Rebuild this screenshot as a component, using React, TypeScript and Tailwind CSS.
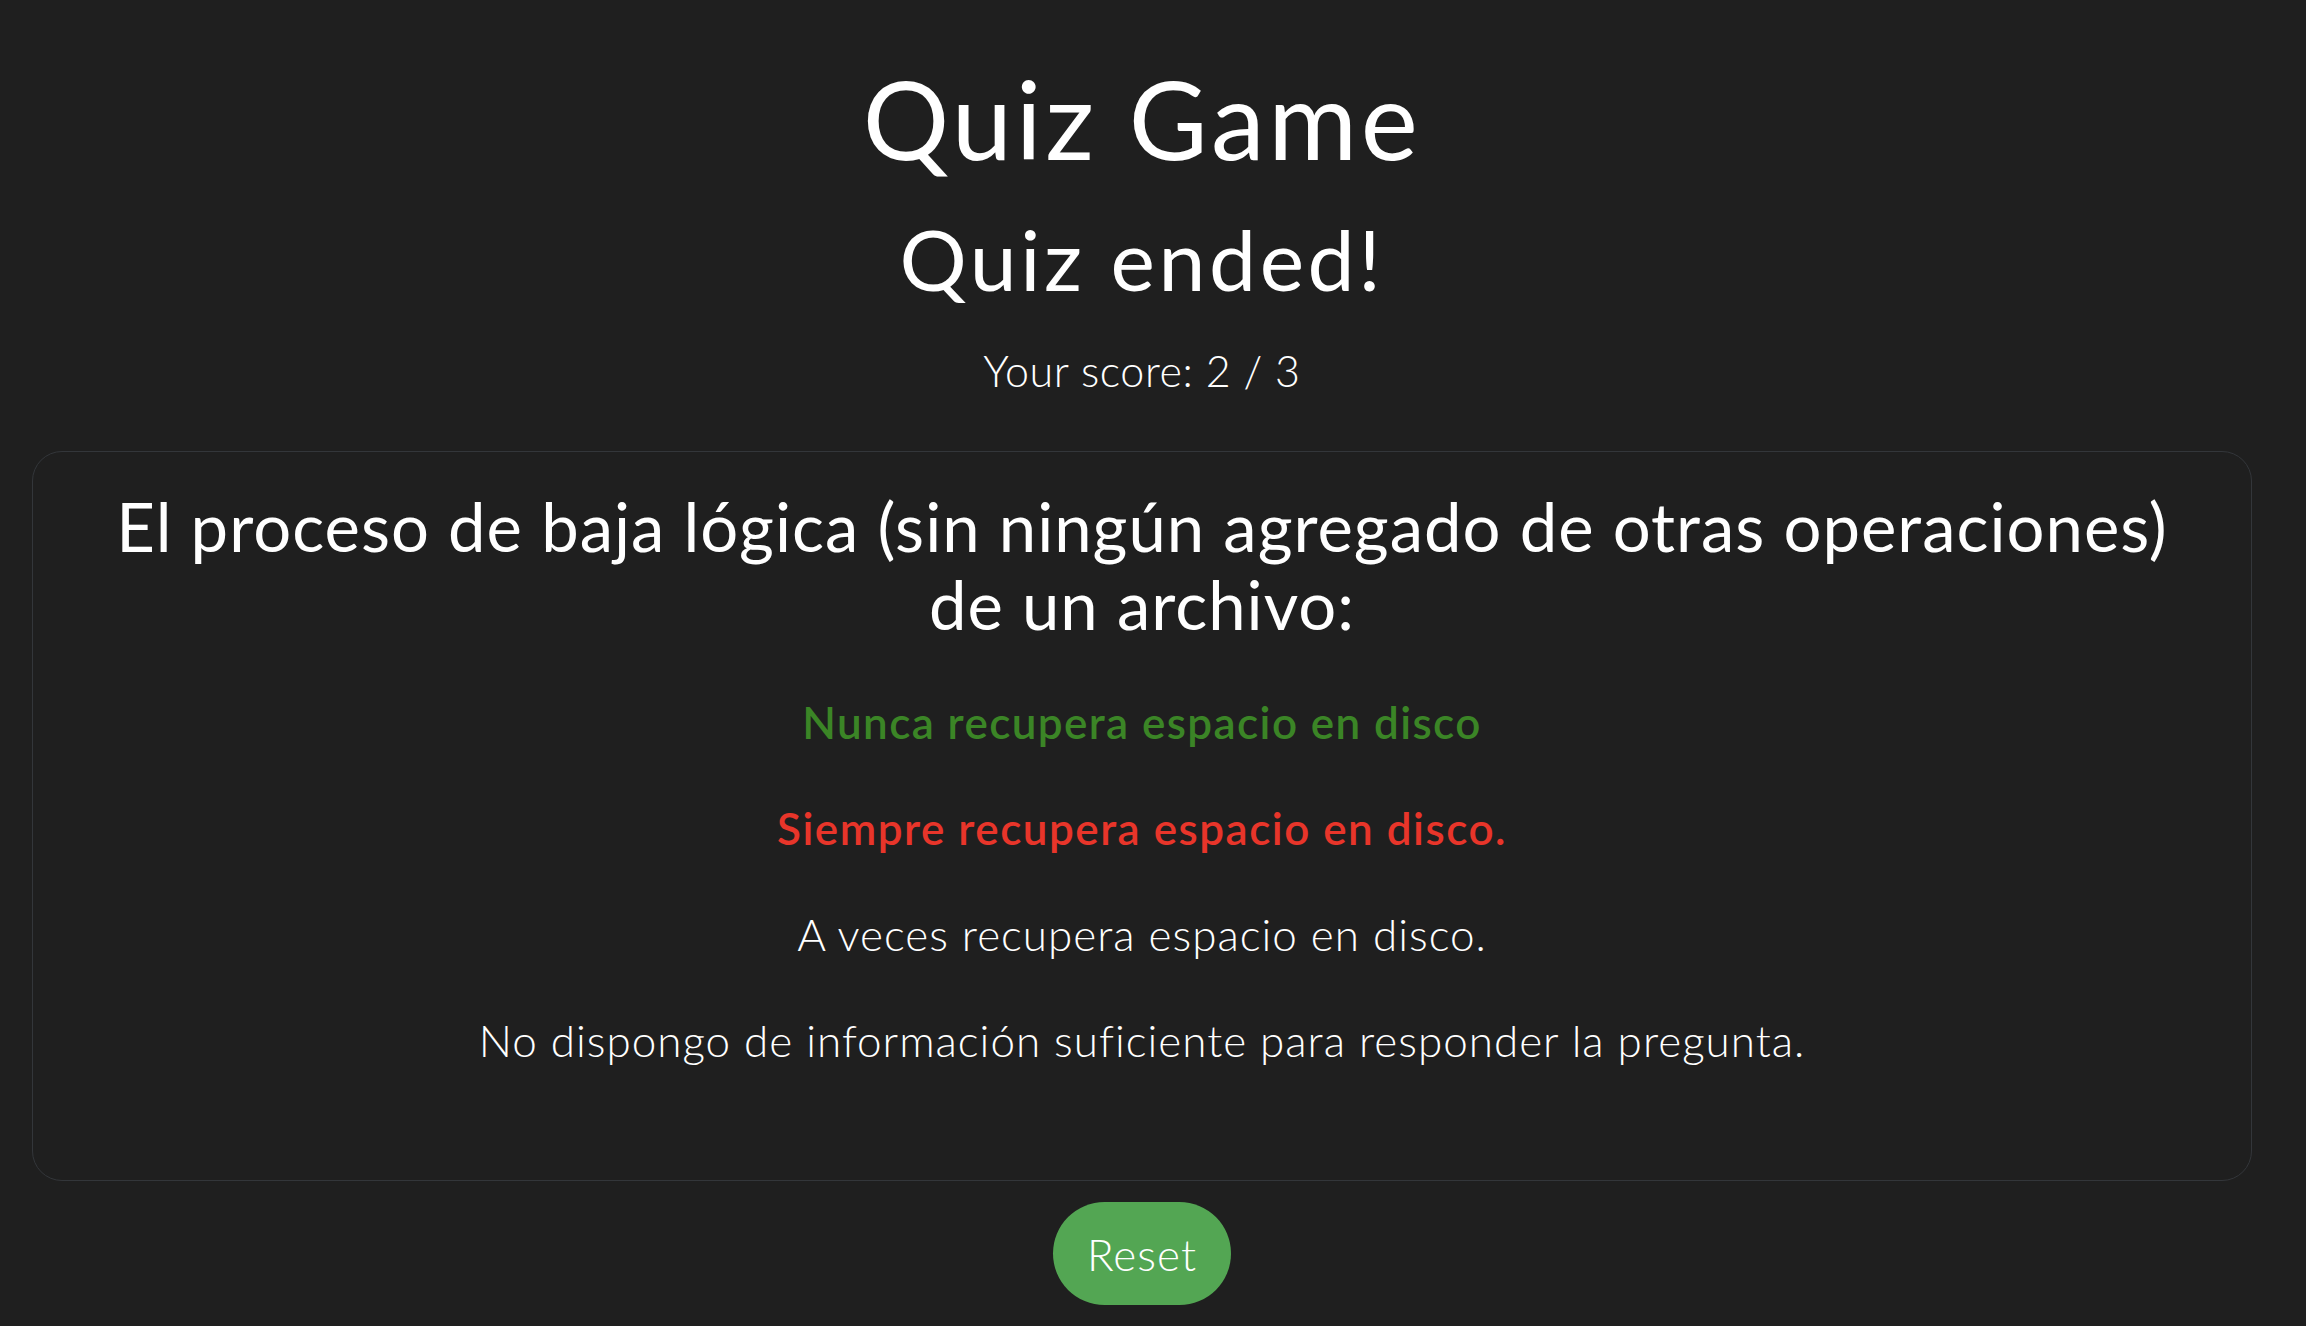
const options = [
    { text: "Nunca recupera espacio en disco", state: "correct" },
    { text: "Siempre recupera espacio en disco.", state: "wrong" },
    { text: "A veces recupera espacio en disco.", state: "none" },
    { text: "No dispongo de información suficiente para responder la pregunta.", state: "none" }
];

function optionClass(state: string) {
    if (state === "correct") return "font-semibold tracking-[1.4px] text-[#3b8526]";
    if (state === "wrong") return "font-semibold tracking-[1.5px] text-[#e8352a]";
    return "font-light tracking-[1px] text-white";
}

export default function App() {
    return (
        <div className="min-h-screen w-full bg-[#1f1f1f] font-['Lato','Liberation_Sans',sans-serif] text-white">
            <div className="flex w-[2284px] flex-col items-center px-8">
                <h1 className="mt-[64px] text-[108px] leading-none font-normal tracking-[3.6px]">Quiz Game</h1>
                <h2 className="mt-[45px] text-[84px] leading-none font-normal tracking-[3.6px]">Quiz ended!</h2>
                <p className="mt-[48px] text-[43px] leading-none font-light tracking-[0.6px]">Your score: 2 / 3</p>

                <div className="mt-[59px] flex w-full flex-col items-center rounded-[30px] border border-[#33363a] px-10 pt-[35px] pb-[118px]">
                    <h3 className="text-center text-[67px] leading-[78px] font-normal tracking-[1px]">
                        El proceso de baja lógica (sin ningún agregado de otras operaciones) de un archivo:
                    </h3>
                    <ul className="mt-[57px] flex flex-col items-center gap-[62px]">
                        {options.map((item) => (
                            <li key={item.text} className={"text-[44px] leading-none " + optionClass(item.state)}>
                                {item.text}
                            </li>
                        ))}
                    </ul>
                </div>

                <button className="mt-[21px] flex h-[103px] w-[178px] items-center justify-center rounded-full bg-[#53a653] text-[44px] font-light tracking-[1px] text-white">
                    Reset
                </button>
            </div>
        </div>
    );
}
